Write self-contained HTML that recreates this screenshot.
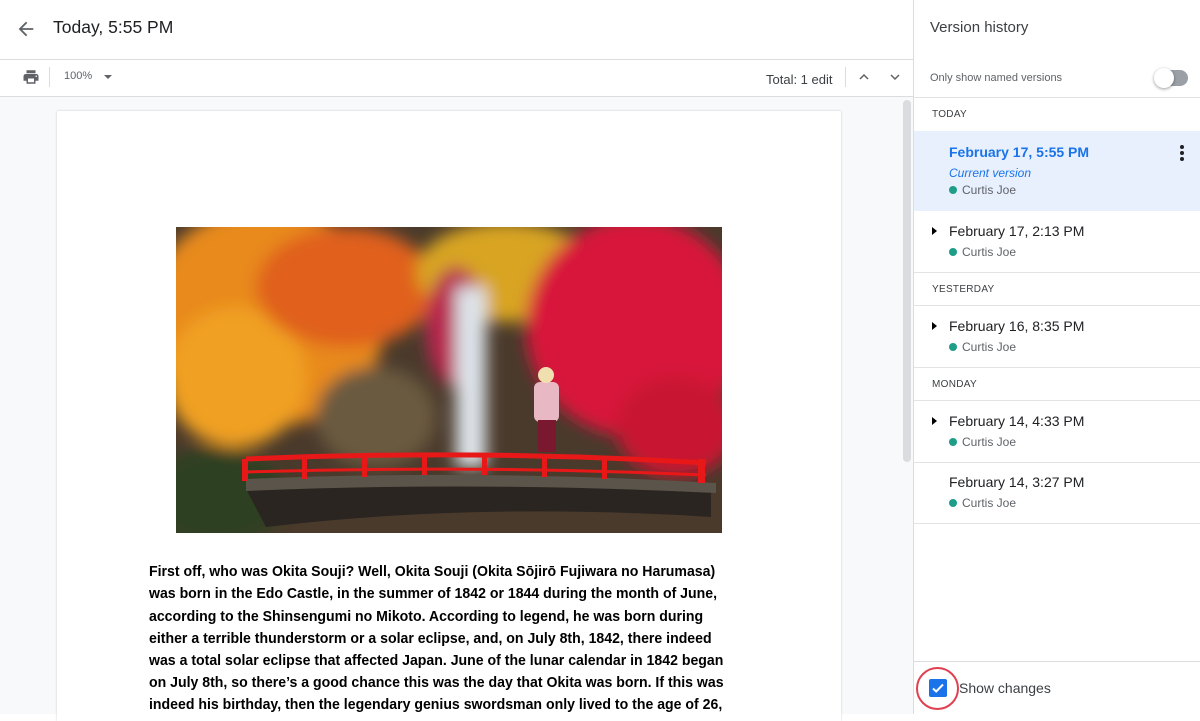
<!DOCTYPE html>
<html><head><meta charset="utf-8"><style>
*{margin:0;padding:0;box-sizing:border-box}
body{width:1200px;height:714px;overflow:hidden;position:relative;background:#fff;font-family:"Liberation Sans",Arial,sans-serif;color:#202124}
.a{position:absolute}
.t{white-space:nowrap}
.line{position:absolute;left:149px;font-weight:bold;font-size:15px;white-space:nowrap;transform:scaleX(0.94);transform-origin:left;color:#000}
.hd{position:absolute;left:932px;font-size:10px;color:#3c4043;letter-spacing:.3px}
.it{position:absolute;left:949px;font-size:14px;color:#202124}
.nm{position:absolute;left:949px;font-size:12px;color:#5f6368}
.nm:before{content:"";display:inline-block;width:8px;height:8px;border-radius:50%;background:#1e9e89;margin-right:5px;vertical-align:0}
.tri{position:absolute;left:932px;width:0;height:0;border-top:4px solid transparent;border-bottom:4px solid transparent;border-left:5px solid #000}
.hl{position:absolute;left:914px;width:286px;height:1px;background:#e3e3e3}
</style></head><body>
<svg class="a" style="left:15px;top:18px" width="22" height="22" viewBox="0 0 24 24"><path d="M20 11H7.8l5.6-5.6L12 4l-8 8 8 8 1.4-1.4L7.8 13H20z" fill="#5f6368"/></svg>
<div class="a t" style="left:53px;top:17px;font-size:17.5px;color:#202124">Today, 5:55 PM</div>
<div class="a" style="left:0;top:59px;width:914px;height:1px;background:#dadce0"></div>
<svg class="a" style="left:22px;top:68px" width="18" height="18" viewBox="0 0 24 24"><path d="M19 8H5c-1.7 0-3 1.3-3 3v6h4v4h12v-4h4v-6c0-1.7-1.3-3-3-3zm-3 11H8v-5h8v5zm3-7c-.6 0-1-.4-1-1s.4-1 1-1 1 .4 1 1-.4 1-1 1zm-1-9H6v4h12V3z" fill="#5f6368"/></svg>
<div class="a" style="left:49px;top:67px;width:1px;height:20px;background:#dadce0"></div>
<div class="a t" style="left:64px;top:70px;font-size:11px;color:#5f6368">100%</div>
<div class="a" style="left:104px;top:75px;border-left:4px solid transparent;border-right:4px solid transparent;border-top:4px solid #5f6368"></div>
<div class="a t" style="left:766px;top:72px;font-size:13px;color:#3c4043">Total: 1 edit</div>
<div class="a" style="left:845px;top:67px;width:1px;height:20px;background:#dadce0"></div>
<svg class="a" style="left:858px;top:72px" width="12" height="10" viewBox="0 0 12 10"><path d="M2 7l4-4 4 4" stroke="#5f6368" stroke-width="1.5" fill="none"/></svg>
<svg class="a" style="left:889px;top:72px" width="12" height="10" viewBox="0 0 12 10"><path d="M2 3l4 4 4-4" stroke="#5f6368" stroke-width="1.5" fill="none"/></svg>
<div class="a" style="left:0;top:96px;width:914px;height:1px;background:#dadce0"></div>
<div class="a" style="left:0;top:97px;width:914px;height:617px;background:#f8f9fa"></div>
<div class="a" style="left:57px;top:111px;width:784px;height:610px;background:#fff;box-shadow:0 0 2px rgba(0,0,0,.2)"></div>
<div class="a" style="left:903px;top:100px;width:8px;height:362px;background:#dadce0;border-radius:4px"></div>
<svg class="a" style="left:176px;top:227px" width="546" height="306" viewBox="0 0 546 306">
<defs><filter id="b"><feGaussianBlur stdDeviation="8"/></filter></defs>
<rect width="546" height="306" fill="#4a3a2c"/>
<g filter="url(#b)">
<ellipse cx="90" cy="90" rx="120" ry="110" fill="#e88a1c"/>
<ellipse cx="60" cy="150" rx="70" ry="70" fill="#f0a020"/>
<ellipse cx="170" cy="60" rx="90" ry="60" fill="#e0601a"/>
<ellipse cx="330" cy="45" rx="90" ry="50" fill="#d8a420"/>
<ellipse cx="460" cy="100" rx="110" ry="110" fill="#d8183a"/>
<ellipse cx="500" cy="200" rx="60" ry="50" fill="#c81430"/>
<ellipse cx="280" cy="100" rx="30" ry="60" fill="#b82850"/>
<rect x="280" y="60" width="30" height="180" fill="#dde4ea"/>
<ellipse cx="200" cy="190" rx="60" ry="50" fill="#6a5a40"/>
<ellipse cx="40" cy="270" rx="70" ry="50" fill="#2e4020"/>
</g>
<path d="M70 262 Q300 250 535 262 L535 290 Q300 275 90 300 Z" fill="#2a2520"/>
<path d="M70 252 Q300 242 540 256 L540 266 Q300 254 70 264 Z" fill="#5a544a"/>
<path d="M70 232 Q300 222 530 236" stroke="#e81818" stroke-width="5" fill="none"/>
<path d="M70 245 Q300 238 530 248" stroke="#e81818" stroke-width="3" fill="none"/>
<g fill="#e81818"><rect x="66" y="232" width="6" height="22"/><rect x="126" y="230" width="5" height="22"/><rect x="186" y="228" width="5" height="22"/><rect x="246" y="226" width="5" height="22"/><rect x="306" y="226" width="5" height="22"/><rect x="366" y="228" width="5" height="22"/><rect x="426" y="230" width="5" height="22"/><rect x="522" y="232" width="7" height="24"/></g>
<rect x="358" y="155" width="25" height="40" rx="6" fill="#e8b8c4"/>
<circle cx="370" cy="148" r="8" fill="#f0e0b0"/>
<rect x="362" y="193" width="18" height="32" fill="#7a1830"/>
</svg>
<div class="line" style="top:563px">First off, who was Okita Souji? Well, Okita Souji (Okita Sōjirō Fujiwara no Harumasa)</div>
<div class="line" style="top:585px">was born in the Edo Castle, in the summer of 1842 or 1844 during the month of June,</div>
<div class="line" style="top:608px">according to the Shinsengumi no Mikoto. According to legend, he was born during</div>
<div class="line" style="top:630px">either a terrible thunderstorm or a solar eclipse, and, on July 8th, 1842, there indeed</div>
<div class="line" style="top:652px">was a total solar eclipse that affected Japan. June of the lunar calendar in 1842 began</div>
<div class="line" style="top:674px">on July 8th, so there’s a good chance this was the day that Okita was born. If this was</div>
<div class="line" style="top:696px">indeed his birthday, then the legendary genius swordsman only lived to the age of 26,</div>
<div class="a" style="left:913px;top:0;width:1px;height:714px;background:#dadce0"></div>
<div class="a t" style="left:930px;top:19px;font-size:15px;color:#3c4043">Version history</div>
<div class="a t" style="left:930px;top:72px;font-size:11px;color:#5f6368">Only show named versions</div>
<div class="a" style="left:1157px;top:70px;width:31px;height:16px;border-radius:8px;background:#9aa0a6"></div>
<div class="a" style="left:1154px;top:68px;width:20px;height:20px;border-radius:50%;background:#fff;box-shadow:0 1px 3px rgba(0,0,0,.4)"></div>
<div class="hl" style="top:97px"></div>
<div class="hd" style="top:109px">TODAY</div>
<div class="a" style="left:914px;top:131px;width:286px;height:80px;background:#e8f0fe"></div>
<div class="a t" style="left:949px;top:144px;font-size:14px;font-weight:bold;color:#1a73e8">February 17, 5:55 PM</div>
<div class="a t" style="left:949px;top:166px;font-size:12px;font-style:italic;color:#1a73e8">Current version</div>
<div class="nm t" style="top:183px">Curtis Joe</div>
<svg class="a" style="left:1178px;top:144px" width="8" height="18" viewBox="0 0 8 18"><circle cx="4" cy="3" r="2" fill="#202124"/><circle cx="4" cy="9" r="2" fill="#202124"/><circle cx="4" cy="15" r="2" fill="#202124"/></svg>
<div class="tri" style="top:227px"></div>
<div class="it t" style="top:223px">February 17, 2:13 PM</div>
<div class="nm t" style="top:245px">Curtis Joe</div>
<div class="hl" style="top:272px"></div>
<div class="hd" style="top:284px">YESTERDAY</div>
<div class="hl" style="top:305px"></div>
<div class="tri" style="top:322px"></div>
<div class="it t" style="top:318px">February 16, 8:35 PM</div>
<div class="nm t" style="top:340px">Curtis Joe</div>
<div class="hl" style="top:367px"></div>
<div class="hd" style="top:379px">MONDAY</div>
<div class="hl" style="top:400px"></div>
<div class="tri" style="top:417px"></div>
<div class="it t" style="top:413px">February 14, 4:33 PM</div>
<div class="nm t" style="top:435px">Curtis Joe</div>
<div class="hl" style="top:462px"></div>
<div class="it t" style="top:474px">February 14, 3:27 PM</div>
<div class="nm t" style="top:496px">Curtis Joe</div>
<div class="hl" style="top:523px"></div>
<div class="hl" style="top:661px;background:#dadce0"></div>
<div class="a" style="left:929px;top:679px;width:18px;height:18px;border-radius:2px;background:#1a73e8"></div>
<svg class="a" style="left:929px;top:679px" width="18" height="18" viewBox="0 0 18 18"><path d="M4 9.5l3.2 3L14 5.5" stroke="#fff" stroke-width="2" fill="none"/></svg>
<div class="a" style="left:916px;top:667px;width:43px;height:43px;border-radius:50%;border:2px solid #e04050"></div>
<div class="a t" style="left:959px;top:680px;font-size:14px;color:#3c4043">Show changes</div>
</body></html>
